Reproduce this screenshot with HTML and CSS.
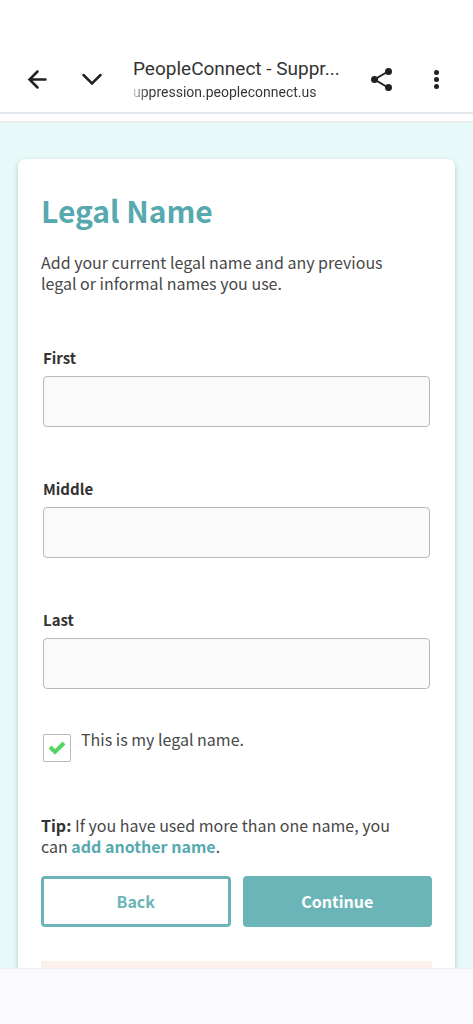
FILE: index.html
```html
<!DOCTYPE html>
<html lang="en">
<head>
  <meta charset="UTF-8">
  <meta name="viewport" content="width=device-width, initial-scale=1.0">
  <title>PeopleConnect - Suppression</title>
  <link rel="stylesheet" href="styles.css">
</head>
<body>
  <header class="browser-bar">
    <button class="icon-btn" type="button" aria-label="Back to app">
      <svg width="24" height="24" viewBox="0 0 24 24"><path d="M20.5 12.5H4.500M12.5 4.5l-8 8 8 8"/></svg>
    </button>
    <button class="icon-btn" type="button" aria-label="Minimize">
      <svg width="24" height="24" viewBox="0 0 24 24"><path d="M3.5 8l8.500 8.500L20.500 8"/></svg>
    </button>
    <div class="page-info">
      <div class="page-title">PeopleConnect - Suppr...</div>
      <div class="page-url">uppression.peopleconnect.us</div>
    </div>
    <button class="icon-btn" type="button" aria-label="Share">
      <svg width="24" height="24" viewBox="0 0 24 24">
        <path class="thin" d="M18 4.5L4.5 12.5l13.5 8"/>
        <circle cx="18.5" cy="4.5" r="3.5"/><circle cx="4.5" cy="12.5" r="3.5"/><circle cx="18.5" cy="20.5" r="3.5"/>
      </svg>
    </button>
    <button class="icon-btn" type="button" aria-label="More options">
      <svg width="24" height="24" viewBox="0 0 24 24">
        <circle cx="11.5" cy="5.5" r="2.5"/><circle cx="11.5" cy="12.5" r="2.5"/><circle cx="11.5" cy="19.5" r="2.5"/>
      </svg>
    </button>
  </header>

  <main class="page">
    <form class="card">
      <h1>Legal Name</h1>
      <p class="intro">Add your current legal name and any previous legal or informal names you use.</p>

      <div class="field">
        <label for="first">First</label>
        <input type="text" id="first" name="first">
      </div>
      <div class="field">
        <label for="middle">Middle</label>
        <input type="text" id="middle" name="middle">
      </div>
      <div class="field">
        <label for="last">Last</label>
        <input type="text" id="last" name="last">
      </div>

      <div class="check-row">
        <span class="checkbox">
          <input type="checkbox" id="legal" name="legal" checked>
          <svg width="18" height="14" viewBox="0 0 18 14"><path d="M2 6l5 5 9-9"/></svg>
        </span>
        <label for="legal">This is my legal name.</label>
      </div>

      <p class="tip"><strong>Tip:</strong> If you have used more than one name, you can <a href="#">add another name</a>.</p>

      <div class="actions">
        <button class="btn btn-outline" type="button">Back</button>
        <button class="btn btn-solid" type="submit">Continue</button>
      </div>

      <div class="notice"></div>
    </form>
  </main>

  <footer class="system-bar"></footer>
</body>
</html>
```
FILE: styles.css
```css
* {
  box-sizing: border-box;
}
body {
  margin: 0;
  height: 100vh;
  display: flex;
  flex-direction: column;
  background: #fff;
  color: #484848;
  font-family: "Noto Sans CJK SC", "Noto Sans", sans-serif;
  font-size: 16px;
  line-height: 21px;
}
h1, p {
  margin: 0;
}

/* Browser toolbar */
.browser-bar {
  display: flex;
  align-items: center;
  padding: 52px 9px 6px;
  border-bottom: 2px solid #e3e9ef;
  font-family: Roboto, sans-serif;
  color: #333;
}
.icon-btn {
  display: flex;
  align-items: center;
  justify-content: center;
  width: 55px;
  height: 54px;
  padding: 0;
  border: none;
  background: none;
}
.icon-btn svg {
  fill: #202124;
}
.icon-btn path {
  fill: none;
  stroke: #202124;
  stroke-width: 2.5;
  stroke-linecap: round;
}
.icon-btn path.thin {
  stroke-width: 2;
}
.page-info {
  flex: 1;
  min-width: 0;
  padding: 2px 0 0 14px;
  white-space: nowrap;
}
.page-title {
  font-size: 19px;
  line-height: 24px;
}
.page-url {
  font-size: 14px;
  line-height: 22px;
  background: linear-gradient(to right, #ccc, #333 14px);
  background-clip: text;
  color: transparent;
}

/* Page */
.page {
  flex: 1;
  min-height: 0;
  overflow: hidden;
  margin-top: 7px;
  padding: 36px 18px 0;
  border-top: 2px solid #e8eeee;
  background: #e8f9f9;
}
.card {
  padding: 30px 23px;
  border-radius: 8px;
  background: #fff;
  box-shadow: 0 2px 5px rgba(0, 60, 60, 0.25);
}
h1 {
  color: #56a9ae;
  font-size: 30px;
  line-height: 42px;
}
.intro {
  margin: 21px 0 53px;
  padding-right: 20px;
}
.field {
  display: flex;
  flex-direction: column;
  gap: 8px;
  margin: 0 2px 51px;
}
.field label {
  color: #333;
  font-size: 15px;
  font-weight: bold;
}
.field input {
  width: 100%;
  height: 51px;
  padding: 0 12px;
  border: 1px solid #b9b9b9;
  border-radius: 4px;
  background: #fafafa;
  font: inherit;
}
.check-row {
  display: flex;
  gap: 10px;
  margin: -11px 2px 0;
}
.checkbox {
  position: relative;
  margin-top: 5px;
}
.checkbox input {
  display: block;
  width: 28px;
  height: 28px;
  margin: 0;
  appearance: none;
  border: 1px solid #b9b9b9;
  border-radius: 2px;
  background: #fff;
}
.checkbox svg {
  position: absolute;
  top: 7px;
  left: 5px;
  display: none;
  pointer-events: none;
  fill: none;
  stroke: #57d563;
  stroke-width: 4;
}
.checkbox input:checked + svg {
  display: block;
}
.tip {
  margin: 53px 0 19px;
  padding-right: 20px;
}
.tip strong {
  color: #333;
}
.tip a {
  color: #56a9ae;
  font-weight: bold;
  text-decoration: none;
}
.actions {
  display: flex;
  gap: 12px;
}
.btn {
  flex: 1;
  height: 51px;
  border: 3px solid #6bb5b8;
  border-radius: 4px;
  font: inherit;
  font-weight: bold;
}
.btn-outline {
  background: #fff;
  color: #6bb5b8;
}
.btn-solid {
  background: #6bb5b8;
  color: #fff;
}
.notice {
  height: 80px;
  margin-top: 34px;
  background: #fcf1ea;
}

.system-bar {
  height: 56px;
  border-top: 1px solid #ededf0;
  background: #f9f9fe;
}
```
